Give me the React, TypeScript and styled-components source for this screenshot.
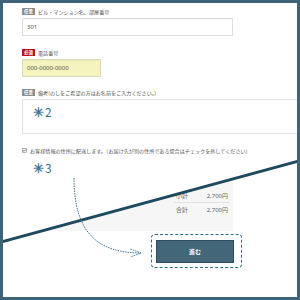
import React from "react";
import styled, { createGlobalStyle } from "styled-components";

const GlobalStyle = createGlobalStyle`
  html, body { margin: 0; padding: 0; background: #fff; }
  body { font-family: "Noto Sans CJK JP", "Noto Sans", sans-serif; }
`;

const Frame = styled.div`
  position: relative;
  width: 300px;
  height: 300px;
  box-sizing: border-box;
  border: 3px solid #3f6478;
  background: #fff;
  overflow: hidden;
  display: grid;
  grid-template-columns: 294px;
  grid-template-rows: 294px;
`;

const Layer = styled.div`
  grid-area: 1 / 1;
  min-width: 0;
  min-height: 0;
`;

const FormPanel = styled(Layer)`
  background: #fff;
  clip-path: polygon(0 0, 100% 0, 100% 158.5px, 0 238.5px);
  padding: 5px 0 0 19px;
  display: flex;
  flex-direction: column;
  align-items: flex-start;
`;

const Field = styled.div<{ $top: number }>`
  display: flex;
  flex-direction: column;
  gap: 3px;
  margin-top: ${(p) => p.$top}px;
`;

const LabelRow = styled.div`
  display: flex;
  align-items: center;
  gap: 3px;
  height: 7px;
`;

const Badge = styled.span<{ $required?: boolean }>`
  width: 13px;
  height: 7px;
  display: flex;
  align-items: center;
  justify-content: center;
  background: ${(p) => (p.$required ? "#b3151c" : "#8c8c8c")};
  color: #fff;
  font-size: 4.4px;
  font-weight: 700;
  line-height: 1;
`;

const LabelText = styled.span`
  font-size: 5.1px;
  line-height: 1;
  color: #555;
  white-space: nowrap;
`;

const TextInput = styled.div<{ $width: number; $filled?: boolean }>`
  width: ${(p) => p.$width}px;
  height: 18px;
  box-sizing: border-box;
  border: 1px solid ${(p) => (p.$filled ? "#dcdab4" : "#dedede")};
  background: ${(p) => (p.$filled ? "#f5f3be" : "#fff")};
  box-shadow: inset 0 1px 1px rgba(0, 0, 0, 0.04);
  padding-left: 4px;
  display: flex;
  align-items: center;
  font-family: "Noto Sans", "Noto Sans CJK JP", sans-serif;
  font-size: 6px;
  color: #555;
`;

const NoteBox = styled.div`
  width: 300px;
  height: 35px;
  box-sizing: border-box;
  border: 1px solid #e2e2e2;
  background: #fff;
  padding: 5px 10px;
`;

const Annotation = styled.div`
  display: flex;
  align-items: baseline;
  gap: 1px;
  font-family: "Noto Sans CJK JP", sans-serif;
  font-size: 12px;
  line-height: 13px;
  color: #2f7093;
  white-space: nowrap;
`;

const Star = styled.span`
  font-family: "DejaVu Sans", sans-serif;
  font-size: 13px;
  -webkit-text-stroke: 0.35px #2f7093;
`;

const CheckRow = styled.div`
  display: flex;
  align-items: center;
  gap: 3px;
  margin-top: 13px;
  height: 7px;
`;

const CheckText = styled.span`
  font-size: 5.1px;
  line-height: 1;
  color: #555;
  white-space: nowrap;
`;

const LowerNote = styled(Annotation)`
  margin: 7px 0 0 11px;
`;

const SummaryPanel = styled(Layer)`
  background: #fff;
  display: flex;
  flex-direction: column;
  align-items: flex-start;
`;

const SummaryBox = styled.div`
  width: 230px;
  height: 228px;
  box-sizing: border-box;
  background: #f6f6f6;
  padding: 0 3px 14px 0;
  display: flex;
  flex-direction: column;
  justify-content: flex-end;
  align-items: flex-end;
`;

const TotalRow = styled.div<{ $divider?: boolean }>`
  width: 56px;
  height: 14px;
  box-sizing: border-box;
  padding: 0 2px;
  display: flex;
  align-items: center;
  justify-content: space-between;
  border-bottom: 1px solid ${(p) => (p.$divider ? "#e2e2e2" : "transparent")};
  font-size: 6px;
  color: #666;
  white-space: nowrap;
`;

const Amount = styled.span`
  font-family: "Noto Sans", "Noto Sans CJK JP", sans-serif;
`;

const ButtonFocus = styled.div`
  margin: 3px 0 0 148px;
  box-sizing: border-box;
  border: 1px dashed #2e6b8a;
  border-radius: 4px;
  padding: 5px 7px 4px 4px;
`;

const SubmitButton = styled.div`
  width: 78px;
  height: 23px;
  box-sizing: border-box;
  background: #436679;
  border: 1px solid #2f4d5d;
  color: #fff;
  font-size: 6px;
  font-weight: 700;
  display: flex;
  align-items: center;
  justify-content: center;
`;

const Overlay = styled.svg`
  position: absolute;
  inset: 0;
  width: 294px;
  height: 294px;
  pointer-events: none;
`;

function CheckIcon() {
  return (
    <svg width="5" height="5" viewBox="0 0 5 5">
      <rect x="0.5" y="0.5" width="4" height="4" fill="#fff" stroke="#888" strokeWidth="0.6" />
      <path d="M1.2 2.5 L2.1 3.4 L3.9 1.4" fill="none" stroke="#444" strokeWidth="0.8" />
    </svg>
  );
}

export default function App() {
  return (
    <>
      <GlobalStyle />
      <Frame>
        <SummaryPanel>
          <SummaryBox>
            <TotalRow $divider>
              <span>小計</span>
              <Amount>2,700円</Amount>
            </TotalRow>
            <TotalRow>
              <span>合計</span>
              <Amount>2,700円</Amount>
            </TotalRow>
          </SummaryBox>
          <ButtonFocus>
            <SubmitButton>進む</SubmitButton>
          </ButtonFocus>
        </SummaryPanel>

        <FormPanel>
          <Field $top={0}>
            <LabelRow>
              <Badge>任意</Badge>
              <LabelText>ビル・マンション名、部屋番号</LabelText>
            </LabelRow>
            <TextInput $width={211}>301</TextInput>
          </Field>
          <Field $top={13}>
            <LabelRow>
              <Badge $required>必須</Badge>
              <LabelText>電話番号</LabelText>
            </LabelRow>
            <TextInput $width={79} $filled>
              000-0000-0000
            </TextInput>
          </Field>
          <Field $top={12}>
            <LabelRow>
              <Badge>任意</Badge>
              <LabelText>備考(のしをご希望の方はお名前をご入力ください。)</LabelText>
            </LabelRow>
            <NoteBox>
              <Annotation>
                <Star>✳</Star>2
              </Annotation>
            </NoteBox>
          </Field>
          <CheckRow>
            <CheckIcon />
            <CheckText>
              お客様情報の住所に配送します。（お届け先が別の住所である場合はチェックを外してください）
            </CheckText>
          </CheckRow>
          <LowerNote>
            <Star>✳</Star>3
          </LowerNote>
        </FormPanel>

        <Overlay viewBox="0 0 294 294">
          <line x1="-2" y1="239" x2="296" y2="158" stroke="#1d4a5e" strokeWidth="3" />
          <path
            d="M71 175 C 71 230, 95 250, 138 250"
            fill="none"
            stroke="#3d7896"
            strokeWidth="1"
            strokeDasharray="1.5 1"
          />
          <path
            d="M127.5 246 L138 250 L127.5 254"
            fill="none"
            stroke="#3d7896"
            strokeWidth="1"
            strokeDasharray="1.5 1"
          />
        </Overlay>
      </Frame>
    </>
  );
}
